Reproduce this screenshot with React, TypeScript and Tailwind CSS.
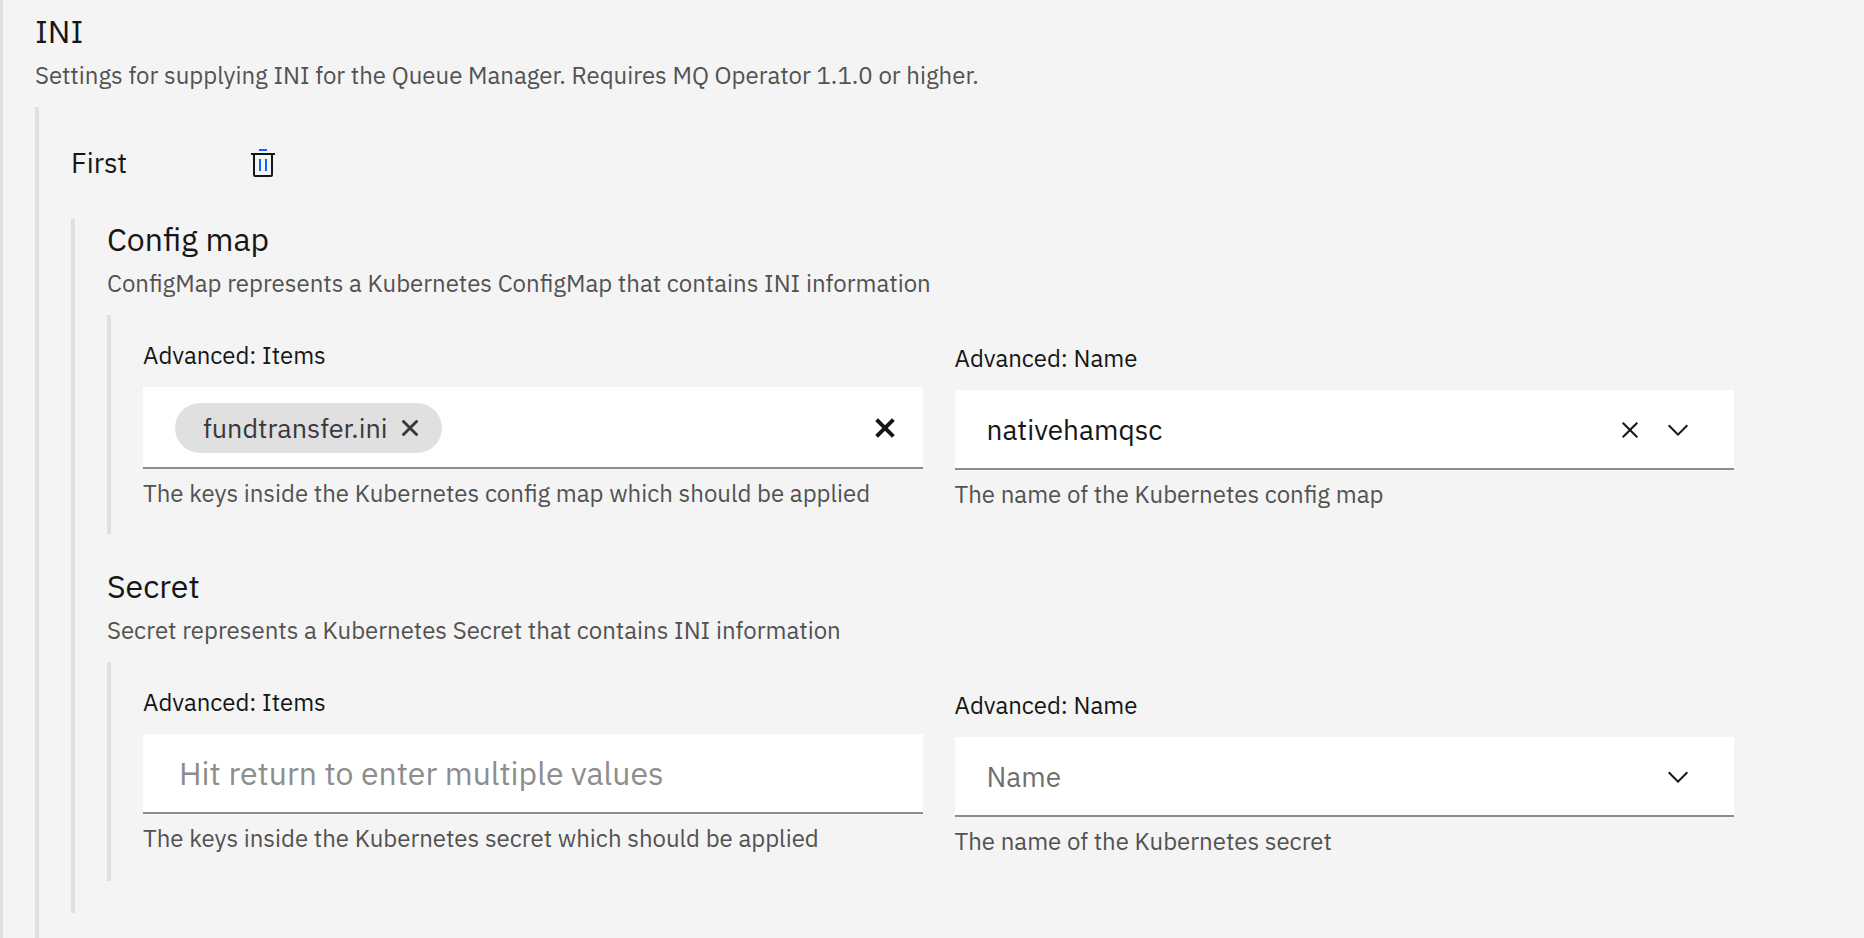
import { useState, type ReactNode } from 'react';

function TrashIcon() {
  return (
    <svg viewBox="0 0 32 32" className="size-8" aria-hidden="true">
      <path fill="#161616" d="M4 6v2h2v20a2 2 0 0 0 2 2h16a2 2 0 0 0 2-2V8h2V6Zm4 22V8h16v20Z" />
      <path fill="#0f62fe" d="M12 12h2v12h-2zM18 12h2v12h-2zM12 2h8v2h-8z" />
    </svg>
  );
}

function TagCloseIcon() {
  return (
    <svg viewBox="0 0 16 16" className="size-4" aria-hidden="true">
      <path
        d="M1.5 1.5 14.5 14.5M14.5 1.5 1.5 14.5"
        fill="none"
        stroke="currentColor"
        strokeWidth="2.9"
        strokeLinecap="round"
      />
    </svg>
  );
}

function ClearAllIcon() {
  return (
    <svg viewBox="0 0 20 20" className="size-5" aria-hidden="true">
      <path d="M1.6 1.6 18.4 18.4M18.4 1.6 1.6 18.4" fill="none" stroke="currentColor" strokeWidth="4" />
    </svg>
  );
}

function CloseIcon() {
  return (
    <svg viewBox="0 0 32 32" className="size-8" aria-hidden="true">
      <path
        fill="currentColor"
        d="M24 9.4 22.6 8 16 14.6 9.4 8 8 9.4l6.6 6.6L8 22.6 9.4 24l6.6-6.6 6.6 6.6 1.4-1.4-6.6-6.6L24 9.4z"
      />
    </svg>
  );
}

function ChevronIcon() {
  return (
    <svg viewBox="0 0 16 16" className="size-8" aria-hidden="true">
      <path fill="currentColor" d="M8 11 3 6l.7-.7L8 9.6l4.3-4.3.7.7z" />
    </svg>
  );
}

function SectionHeader({ title, description }: { title: string; description: string }) {
  return (
    <header className="pb-2">
      <h2 className="text-[32px] leading-[40px]">{title}</h2>
      <p className="text-[24px] leading-[48px] text-[#525252]">{description}</p>
    </header>
  );
}

function Field({ id, label, helper, children }: { id: string; label: string; helper: string; children: ReactNode }) {
  return (
    <div className="min-w-0">
      <label htmlFor={id} className="mb-4 block text-[24px] leading-8">
        {label}
      </label>
      {children}
      <p className="mt-2 text-[24px] leading-8 text-[#525252]">{helper}</p>
    </div>
  );
}

function ItemsInput({ id, initial }: { id: string; initial: string[] }) {
  const [items, setItems] = useState(initial);
  const [draft, setDraft] = useState('');
  const filled = items.length > 0;
  return (
    <div
      className={
        filled
          ? 'flex h-[82px] items-center border-b-2 border-[#8d8d8d] bg-white pt-0.5 pr-7 pl-8'
          : 'flex h-20 items-center border-b-2 border-[#8d8d8d] bg-white pr-7 pl-9'
      }
    >
      {items.map((item) => (
        <span
          key={item}
          className="flex h-[50px] shrink-0 items-center gap-[14px] rounded-full bg-[#e0e0e0] pr-6 pl-7 text-[27px] text-[#393939]"
        >
          {item}
          <button type="button" aria-label={`Remove ${item}`} onClick={() => setItems(items.filter((i) => i !== item))}>
            <TagCloseIcon />
          </button>
        </span>
      ))}
      <input
        id={id}
        value={draft}
        onChange={(e) => setDraft(e.target.value)}
        onKeyDown={(e) => {
          if (e.key === 'Enter' && draft) {
            setItems([...items, draft]);
            setDraft('');
          }
        }}
        placeholder={filled ? '' : 'Hit return to enter multiple values'}
        className="h-full min-w-0 flex-1 bg-transparent text-[32px] outline-none placeholder:text-[#8d8d8d]"
      />
      {filled && (
        <button type="button" aria-label="Clear all items" onClick={() => setItems([])}>
          <ClearAllIcon />
        </button>
      )}
    </div>
  );
}

function NameCombo({ id, initial }: { id: string; initial: string }) {
  const [value, setValue] = useState(initial);
  return (
    <div className="flex h-20 items-center border-b-2 border-[#8d8d8d] bg-white pt-0.5 pr-10 pl-8">
      <input
        id={id}
        value={value}
        onChange={(e) => setValue(e.target.value)}
        placeholder="Name"
        className="h-full min-w-0 flex-1 bg-transparent pb-0.5 text-[28px] outline-none placeholder:text-[#6f6f6f]"
      />
      {value && (
        <button type="button" aria-label="Clear selected item" className="mr-4" onClick={() => setValue('')}>
          <CloseIcon />
        </button>
      )}
      <button type="button" aria-label="Open menu">
        <ChevronIcon />
      </button>
    </div>
  );
}

type GroupProps = {
  id: string;
  title: string;
  description: string;
  kind: string;
  items: string[];
  name: string;
};

function Group({ id, title, description, kind, items, name }: GroupProps) {
  return (
    <section className="pb-8">
      <SectionHeader title={title} description={description} />
      <div className="grid grid-cols-2 gap-8 border-l-4 border-[#e0e0e0] pr-[130px] pb-6 pl-8">
        <div className="pt-6">
          <Field
            id={`${id}-items`}
            label="Advanced: Items"
            helper={`The keys inside the Kubernetes ${kind} which should be applied`}
          >
            <ItemsInput id={`${id}-items`} initial={items} />
          </Field>
        </div>
        <div className="pt-[27px]">
          <Field id={`${id}-name`} label="Advanced: Name" helper={`The name of the Kubernetes ${kind}`}>
            <NameCombo id={`${id}-name`} initial={name} />
          </Field>
        </div>
      </div>
    </section>
  );
}

export default function App() {
  return (
    <main className="flex min-h-screen flex-col border-l-[3px] border-[#e0e0e0] bg-[#f4f4f4] pt-[11px] pl-8 font-['IBM_Plex_Sans','Noto_Sans',sans-serif] text-[#161616] antialiased">
      <SectionHeader
        title="INI"
        description="Settings for supplying INI for the Queue Manager. Requires MQ Operator 1.1.0 or higher."
      />
      <div className="flex-1 border-l-4 border-[#e0e0e0] pl-8">
        <div className="flex h-28 items-center">
          <h3 className="w-44 text-[28px]">First</h3>
          <button type="button" aria-label="Delete First">
            <TrashIcon />
          </button>
        </div>
        <div className="border-l-4 border-[#e0e0e0] pl-8">
          <Group
            id="config-map"
            title="Config map"
            description="ConfigMap represents a Kubernetes ConfigMap that contains INI information"
            kind="config map"
            items={['fundtransfer.ini']}
            name="nativehamqsc"
          />
          <Group
            id="secret"
            title="Secret"
            description="Secret represents a Kubernetes Secret that contains INI information"
            kind="secret"
            items={[]}
            name=""
          />
        </div>
      </div>
    </main>
  );
}
